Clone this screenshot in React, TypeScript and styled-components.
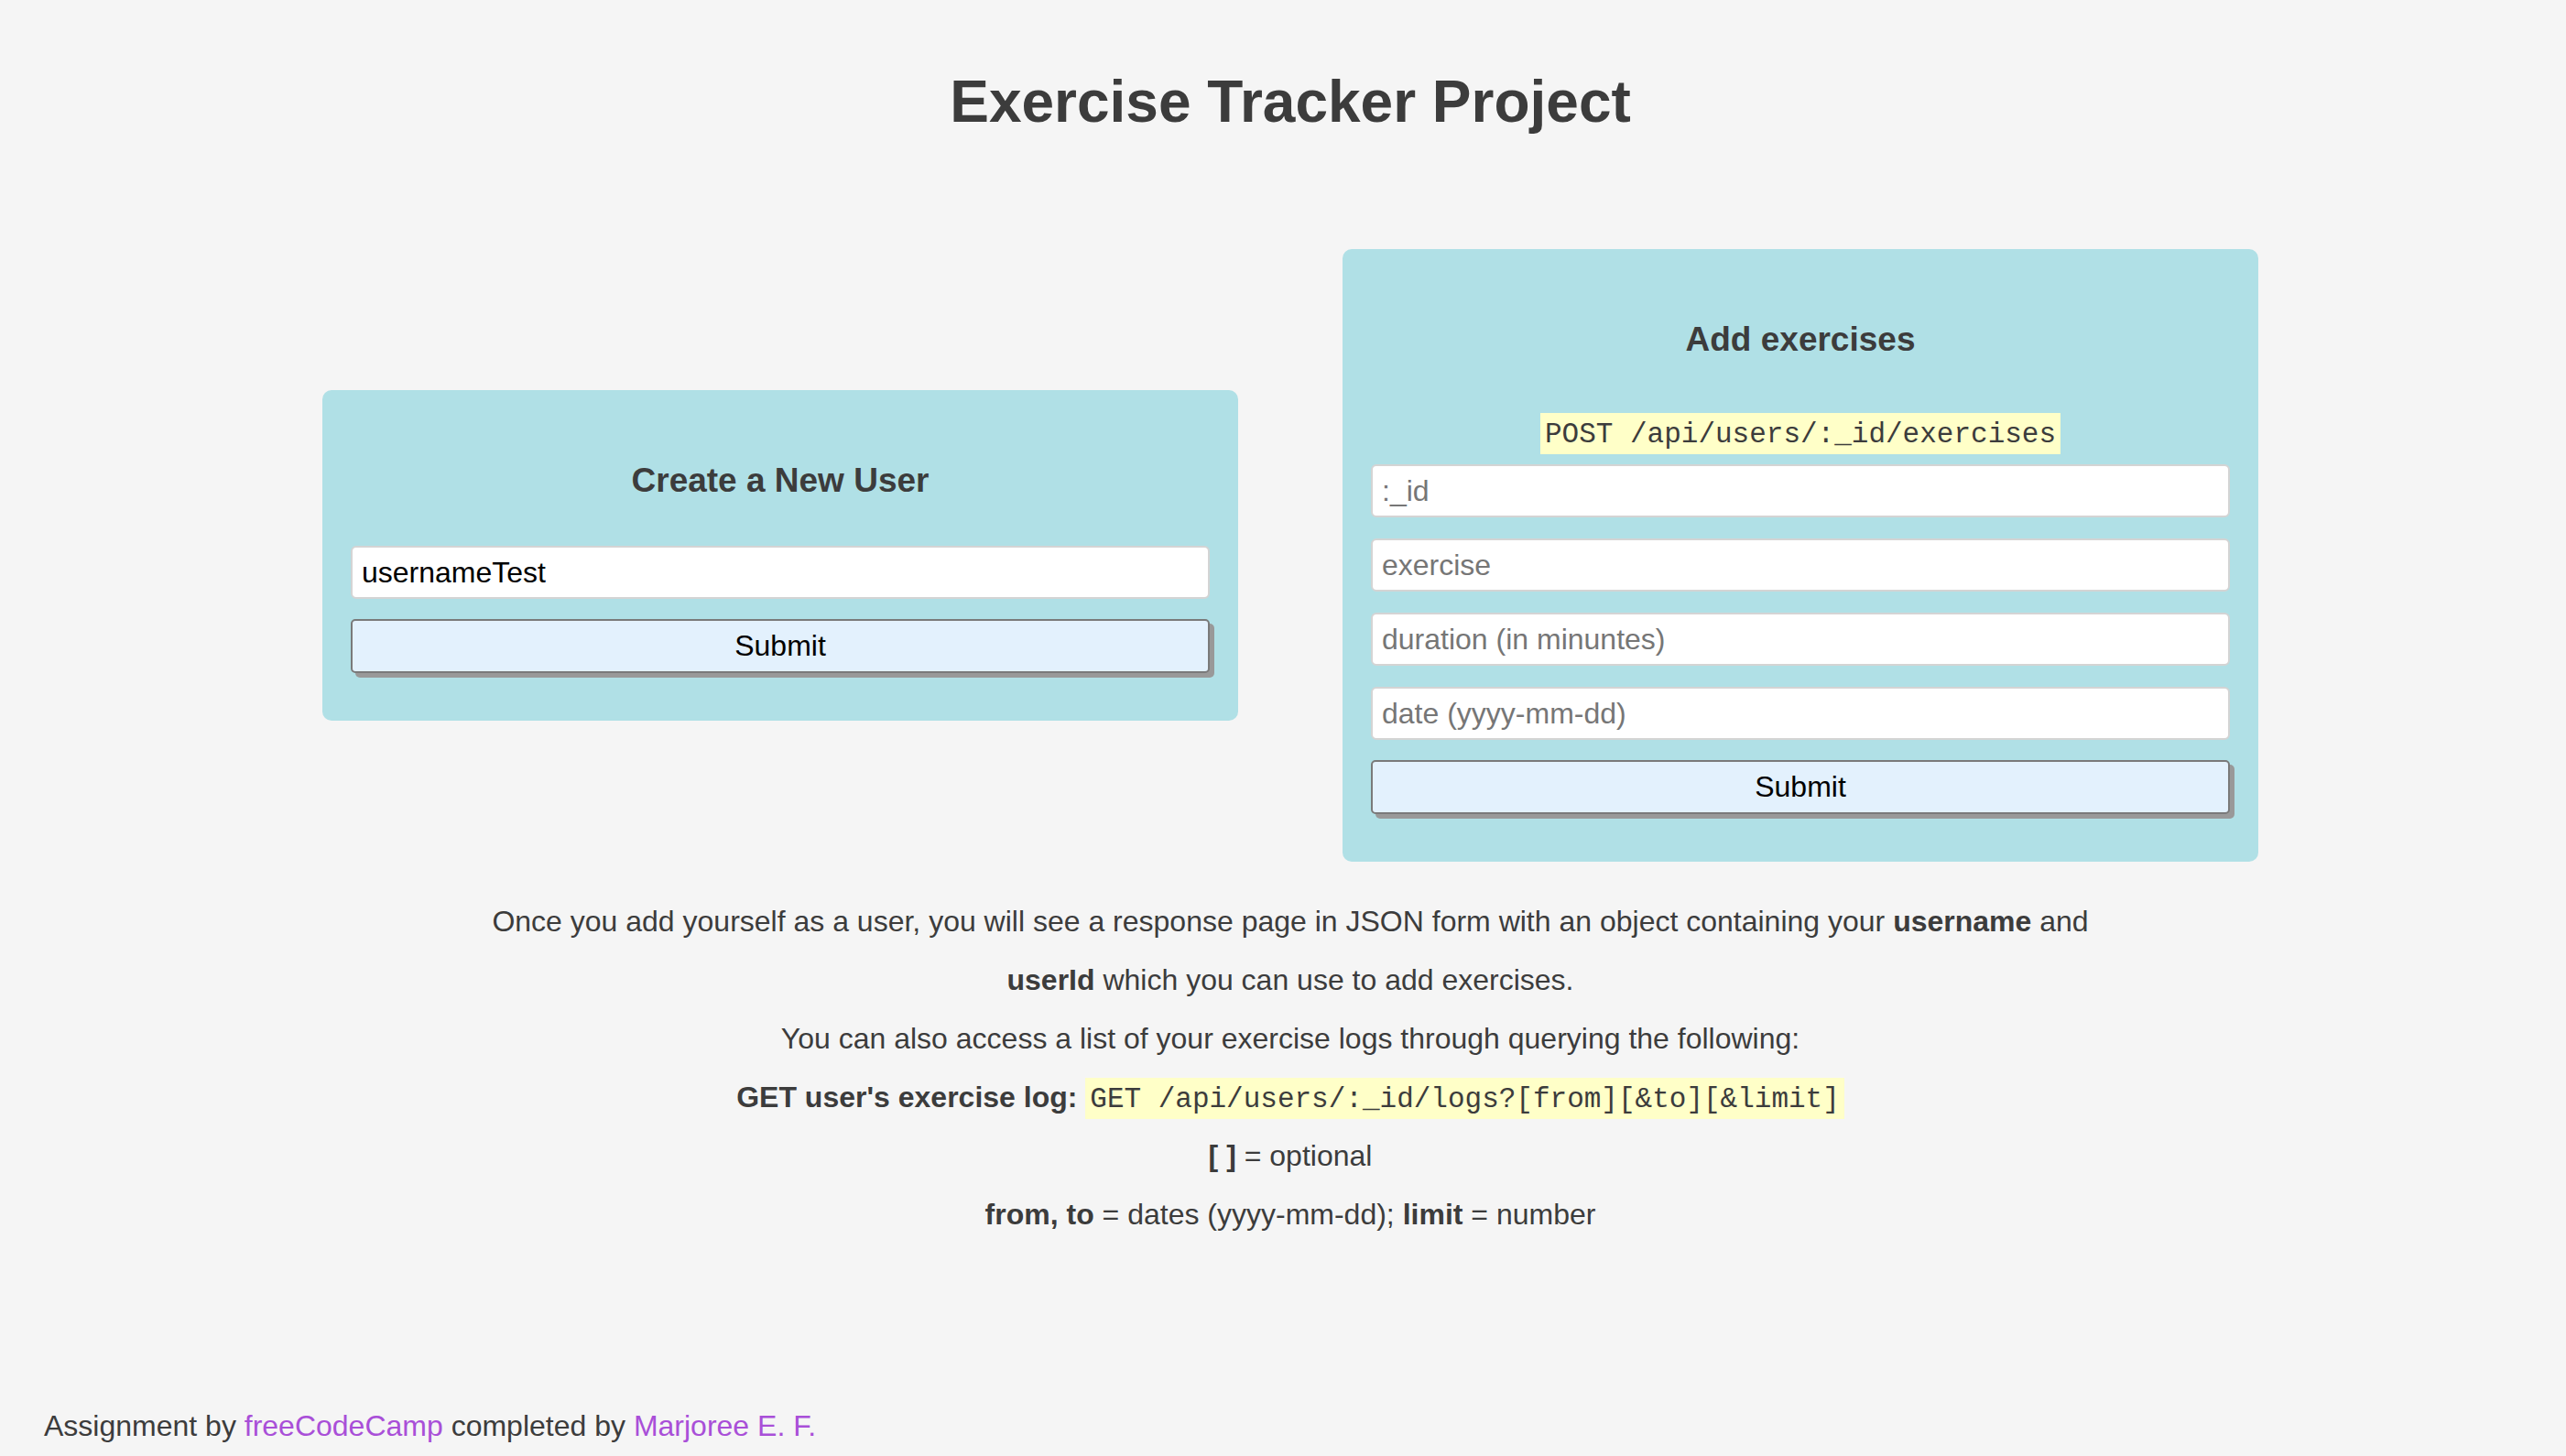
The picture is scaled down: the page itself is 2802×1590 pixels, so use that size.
import React from 'react'
import styled, { createGlobalStyle } from 'styled-components'

const GlobalStyle = createGlobalStyle`
  * {
    box-sizing: border-box;
  }
  html, body {
    margin: 0;
    padding: 0;
    background: #f5f5f5;
  }
  body {
    font-family: 'Liberation Sans', Helvetica, Arial, sans-serif;
    color: #3c3c3c;
  }
`

const Page = styled.div`
  min-height: 100vh;
  display: flex;
  flex-direction: column;
`

const Main = styled.main`
  display: flex;
  flex-direction: column;
  align-items: center;
  padding: 74px 0 0 16px;
`

const Title = styled.h1`
  margin: 0;
  font-size: 64px;
  line-height: 74px;
  font-weight: 700;
  color: #3c3c3c;
`

const Forms = styled.div`
  display: flex;
  align-items: center;
  justify-content: center;
  gap: 114px;
  margin-top: 124px;
`

const Card = styled.form`
  width: 1000px;
  background: #b0e0e6;
  border-radius: 10px;
  padding: 78px 31px 52px;
  display: flex;
  flex-direction: column;
`

const CardTitle = styled.h2<{ $gap: number }>`
  margin: 0 0 ${p => p.$gap}px;
  font-size: 37px;
  line-height: 42px;
  font-weight: 700;
  text-align: center;
  color: #3c3c3c;
`

const EndpointRow = styled.div`
  display: flex;
  justify-content: center;
  margin-bottom: 11px;
`

const Code = styled.code`
  display: inline-block;
  font-family: 'Liberation Mono', 'Courier New', monospace;
  font-size: 31px;
  line-height: 35px;
  padding: 6px 5px 4px;
  background: #ffffc8;
  color: #3c3c3c;
`

const Fields = styled.div`
  display: flex;
  flex-direction: column;
  gap: 23px;
`

const TextInput = styled.input`
  width: 100%;
  height: 58px;
  padding: 0 10px;
  border: 2px solid #d4d4d4;
  border-radius: 6px;
  background: #fff;
  font-family: 'Liberation Sans', Helvetica, Arial, sans-serif;
  font-size: 32px;
  color: #000;
  outline: none;

  &::placeholder {
    color: #767676;
  }
`

const SubmitButton = styled.button`
  width: 100%;
  height: 59px;
  margin-top: 22px;
  border: 2px solid #7a7a7a;
  border-radius: 5px;
  background: #e3f1fd;
  box-shadow: 5px 5px 0 #999;
  font-family: 'Liberation Sans', Helvetica, Arial, sans-serif;
  font-size: 32px;
  color: #000;
  cursor: pointer;
`

const Info = styled.section`
  margin-top: 33px;
  max-width: 1800px;
  text-align: center;
`

const Para = styled.p`
  margin: 0;
  font-size: 32px;
  line-height: 64px;
  color: #3c3c3c;

  strong {
    font-weight: 700;
  }
`

const Footer = styled.footer`
  margin-top: auto;
  padding: 0 0 14px 48px;
  font-size: 32px;
  line-height: 37px;
  color: #3c3c3c;
`

const Link = styled.a`
  color: #a94fd8;
  text-decoration: none;
`

export default function App() {
  return (
    <Page>
      <GlobalStyle />
      <Main>
        <Title>Exercise Tracker Project</Title>
        <Forms>
          <Card onSubmit={e => e.preventDefault()}>
            <CardTitle $gap={50}>Create a New User</CardTitle>
            <TextInput type="text" name="username" defaultValue="usernameTest" />
            <SubmitButton type="submit">Submit</SubmitButton>
          </Card>
          <Card onSubmit={e => e.preventDefault()}>
            <CardTitle $gap={59}>Add exercises</CardTitle>
            <EndpointRow>
              <Code>POST /api/users/:_id/exercises</Code>
            </EndpointRow>
            <Fields>
              <TextInput type="text" name=":_id" placeholder=":_id" />
              <TextInput type="text" name="description" placeholder="exercise" />
              <TextInput type="text" name="duration" placeholder="duration (in minuntes)" />
              <TextInput type="text" name="date" placeholder="date (yyyy-mm-dd)" />
            </Fields>
            <SubmitButton type="submit">Submit</SubmitButton>
          </Card>
        </Forms>
        <Info>
          <Para>
            Once you add yourself as a user, you will see a response page in JSON form with an
            object containing your <strong>username</strong> and <strong>userId</strong> which you
            can use to add exercises.
          </Para>
          <Para>You can also access a list of your exercise logs through querying the following:</Para>
          <Para>
            <strong>GET user's exercise log:</strong>{' '}
            <Code>GET /api/users/:_id/logs?[from][&amp;to][&amp;limit]</Code>
          </Para>
          <Para>
            <strong>[ ]</strong> = optional
          </Para>
          <Para>
            <strong>from, to</strong> = dates (yyyy-mm-dd); <strong>limit</strong> = number
          </Para>
        </Info>
      </Main>
      <Footer>
        Assignment by <Link href="#">freeCodeCamp</Link> completed by{' '}
        <Link href="#">Marjoree E. F.</Link>
      </Footer>
    </Page>
  )
}
